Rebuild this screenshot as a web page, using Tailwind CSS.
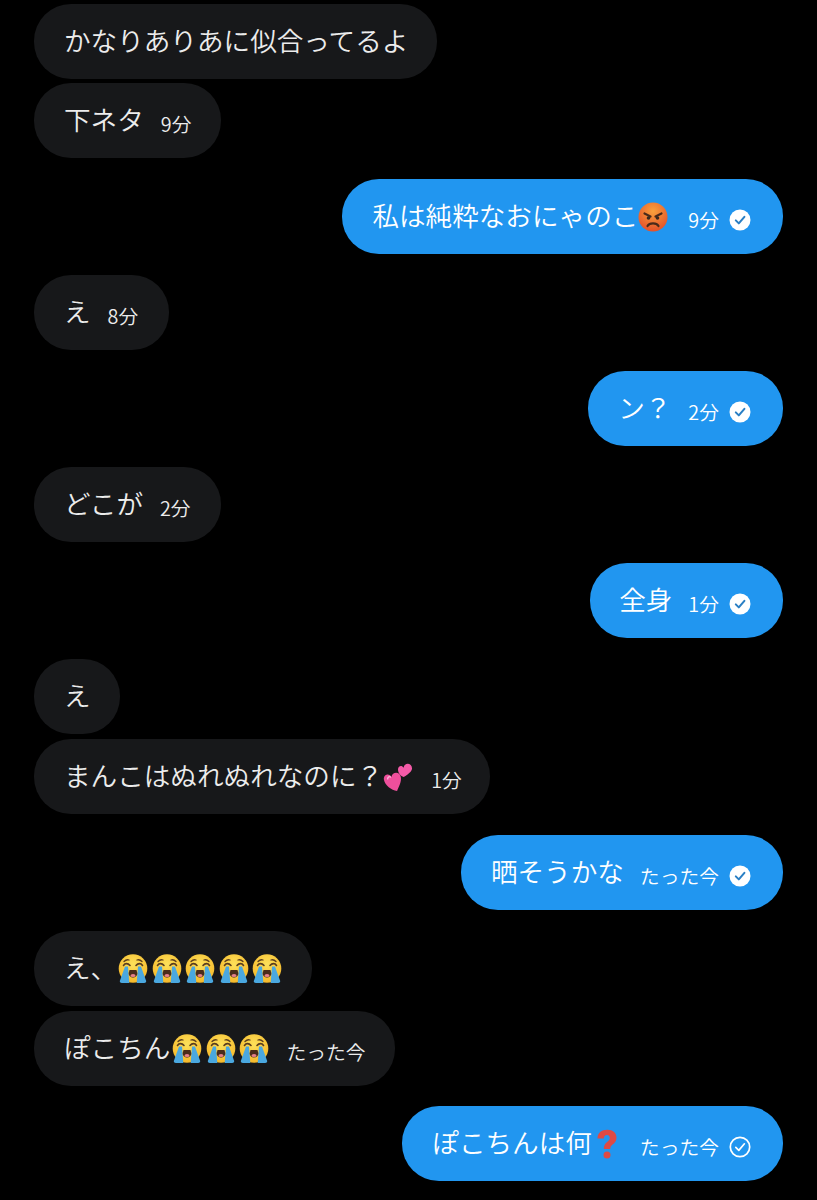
<!DOCTYPE html>
<html lang="ja">
<head>
    <meta charset="UTF-8">
    <meta name="viewport" content="width=device-width, initial-scale=1.0">
    <title>DM</title>
    <script src="https://cdn.jsdelivr.net/npm/@tailwindcss/browser@4"></script>
</head>
<body class="bg-black min-h-screen overflow-hidden font-[350] font-['Noto_Sans_CJK_JP','Noto_Sans',sans-serif]">
    <!-- Icons -->
    <svg class="absolute w-0 h-0">
        <defs>
            <radialGradient id="ag" cx="50%" cy="30%" r="70%"><stop offset="0" stop-color="#f9a13c"/><stop offset="1" stop-color="#e4512a"/></radialGradient>
            <radialGradient id="sg" cx="50%" cy="35%" r="65%"><stop offset="0" stop-color="#fde15a"/><stop offset="1" stop-color="#f5b82a"/></radialGradient>
        </defs>
        <symbol id="check" viewBox="0 0 22 22">
            <circle cx="11" cy="11" r="10.5" fill="#fff"/>
            <path d="M6.8 11.4l3 3 5.6-6.6" fill="none" stroke="#2a7fc4" stroke-width="2" stroke-linecap="round" stroke-linejoin="round"/>
        </symbol>
        <symbol id="check-outline" viewBox="0 0 22 22">
            <circle cx="11" cy="11" r="9.7" fill="none" stroke="#fff" stroke-width="1.7"/>
            <path d="M6.8 11.4l3 3 5.6-6.6" fill="none" stroke="#fff" stroke-width="1.7" stroke-linecap="round" stroke-linejoin="round"/>
        </symbol>
        <symbol id="angry" viewBox="0 0 30 30">
            <circle cx="15" cy="15" r="14.500" fill="url(#ag)"/>
            <path d="M6.500 11.500l6 3M23.500 11.500l-6 3" stroke="#4a2a1a" stroke-width="2.200" stroke-linecap="round"/>
            <circle cx="10.500" cy="16" r="1.800" fill="#3a2a20"/>
            <circle cx="19.500" cy="16" r="1.800" fill="#3a2a20"/>
            <path d="M9.500 24c2-3.500 9-3.500 11 0" fill="none" stroke="#4a2a1a" stroke-width="2.200" stroke-linecap="round"/>
        </symbol>
        <symbol id="hearts" viewBox="0 0 32 32">
            <path d="M15 31C9 30 2 25 1 19c-1-5 5-8 8-3 1-6 9-6 10 0 1 5-2 10-4 15z" fill="#ee4f9c"/>
            <path d="M22 16c-3-1-6-4-6-8 0-4 4-5 6-2 1-6 9-5 9 1 0 3-5 7-9 9z" fill="#f45aa8"/>
            <path d="M5 18c0-2 2-3 3-2" fill="none" stroke="#fbb6d8" stroke-width="1.500" stroke-linecap="round"/>
        </symbol>
        <symbol id="sob" viewBox="0 0 30 30">
            <circle cx="15" cy="14.500" r="14.300" fill="url(#sg)"/>
            <path d="M5.500 11.500c1.500-2.500 4.500-2.500 6.500 0M18 11.500c2-2.500 5-2.500 6.500 0" fill="none" stroke="#5a3d1e" stroke-width="1.600" stroke-linecap="round"/>
            <path d="M6 7.500c1.500-1.500 3.500-2 5-1.500M19 6c1.500-.500 3.500 0 5 1.500" fill="none" stroke="#5a3d1e" stroke-width="1.300" stroke-linecap="round"/>
            <path d="M7 12.500h3l1.300 16.500H4c-2 0-2.800-1.500-1.800-3z" fill="#4aa8e0"/>
            <path d="M20 12.500h3l4.800 13.500c1 1.500.200 3-1.800 3h-7.300z" fill="#4aa8e0"/>
            <path d="M11.500 16h7l.800 3c.300 2-1.300 4.500-4.300 4.500s-4.600-2.500-4.300-4.500z" fill="#4a2c1a"/>
            <ellipse cx="15" cy="21.500" rx="2.500" ry="1.500" fill="#e8808a"/>
        </symbol>
        <symbol id="question" viewBox="0 0 20 30">
            <path d="M.5 9.500C.5 4 4.500 .8 10.300 .8c5.800 0 9.200 3.200 9.200 8 0 3.500-2 5.300-4.200 7-1.500 1.200-2 2.300-2 4.200H6.800c0-3.500 1-5.300 3-6.800 1.700-1.300 3-2.400 3-4.200 0-1.900-1.200-3-2.900-3-2 0-3 1.300-3.100 3.500z" fill="#de4a45"/>
            <circle cx="10" cy="26" r="3.500" fill="#de4a45"/>
        </symbol>
    </svg>

    <div class="flex flex-col px-[34px] pt-[4px]">
        <!-- 相手 -->
        <div class="h-[75px] pb-[4px] self-start flex items-center rounded-[37px] bg-[#17181a] pl-[30px] pr-[29px] text-[#ececec] text-[26.6px]">かなりありあに似合ってるよ</div>
        <div class="h-[75px] pb-[4px] mt-[4px] self-start flex items-center rounded-[37px] bg-[#17181a] pl-[30px] pr-[30px] text-[#ececec] text-[26.6px]">
            <span>下ネタ</span><span class="ml-[17px] mt-[11px] text-[19.800px]">9分</span>
        </div>

        <!-- 自分 -->
        <div class="h-[75px] pb-[4px] mt-[21px] self-end flex items-center rounded-[37px] bg-[#2196f0] pl-[30px] pr-[32px] text-white text-[26.6px]">
            <span>私は純粋なおにゃのこ</span><svg class="w-[30px] h-[30px] mt-[4px]"><use href="#angry"/></svg><span class="ml-[20px] mt-[11px] text-[19.800px]">9分</span><svg class="w-[22px] h-[22px] ml-[10px] mt-[11px]"><use href="#check"/></svg>
        </div>

        <div class="h-[75px] pb-[4px] mt-[21px] self-start flex items-center rounded-[37px] bg-[#17181a] pl-[30px] pr-[31px] text-[#ececec] text-[26.6px]">
            <span>え</span><span class="ml-[17px] mt-[11px] text-[19.800px]">8分</span>
        </div>

        <div class="h-[75px] pb-[4px] mt-[21px] self-end flex items-center rounded-[37px] bg-[#2196f0] pl-[30px] pr-[32px] text-white text-[26.6px]">
            <span>ン？</span><span class="ml-[17px] mt-[11px] text-[19.800px]">2分</span><svg class="w-[22px] h-[22px] ml-[10px] mt-[11px]"><use href="#check"/></svg>
        </div>

        <div class="h-[75px] pb-[4px] mt-[21px] self-start flex items-center rounded-[37px] bg-[#17181a] pl-[30px] pr-[30px] text-[#ececec] text-[26.6px]">
            <span>どこが</span><span class="ml-[17px] mt-[11px] text-[19.800px]">2分</span>
        </div>

        <div class="h-[75px] pb-[4px] mt-[21px] self-end flex items-center rounded-[37px] bg-[#2196f0] pl-[29px] pr-[32px] text-white text-[26.6px]">
            <span>全身</span><span class="ml-[16px] mt-[11px] text-[19.800px]">1分</span><svg class="w-[22px] h-[22px] ml-[10px] mt-[11px]"><use href="#check"/></svg>
        </div>

        <div class="h-[75px] pb-[4px] mt-[21px] self-start flex items-center rounded-[37px] bg-[#17181a] pl-[30px] pr-[29px] text-[#ececec] text-[26.6px]">え</div>
        <div class="h-[75px] pb-[4px] mt-[5px] self-start flex items-center rounded-[37px] bg-[#17181a] pl-[30px] pr-[28px] text-[#ececec] text-[26.6px]">
            <span>まんこはぬれぬれなのに？</span><svg class="w-[30px] h-[32px] mt-[4px]"><use href="#hearts"/></svg><span class="ml-[18px] mt-[11px] text-[19.800px]">1分</span>
        </div>

        <div class="h-[75px] pb-[4px] mt-[21px] self-end flex items-center rounded-[37px] bg-[#2196f0] pl-[30px] pr-[32px] text-white text-[26.6px]">
            <span>晒そうかな</span><span class="ml-[16px] mt-[11px] text-[19.800px]">たった今</span><svg class="w-[22px] h-[22px] ml-[10px] mt-[11px]"><use href="#check"/></svg>
        </div>

        <div class="h-[75px] pb-[4px] mt-[21px] self-start flex items-center rounded-[37px] bg-[#17181a] pl-[30px] pr-[30px] text-[#ececec] text-[26.6px]">
            <span>え、</span><span class="flex gap-[3.500px] ml-[1px] mt-[4px]">
                <svg class="w-[30px] h-[30px]"><use href="#sob"/></svg><svg class="w-[30px] h-[30px]"><use href="#sob"/></svg><svg class="w-[30px] h-[30px]"><use href="#sob"/></svg><svg class="w-[30px] h-[30px]"><use href="#sob"/></svg><svg class="w-[30px] h-[30px]"><use href="#sob"/></svg>
            </span>
        </div>
        <div class="h-[75px] pb-[4px] mt-[5px] self-start flex items-center rounded-[37px] bg-[#17181a] pl-[30px] pr-[29px] text-[#ececec] text-[26.6px]">
            <span>ぽこちん</span><span class="flex gap-[3.500px] ml-[2px] mt-[4px]">
                <svg class="w-[30px] h-[30px]"><use href="#sob"/></svg><svg class="w-[30px] h-[30px]"><use href="#sob"/></svg><svg class="w-[30px] h-[30px]"><use href="#sob"/></svg>
            </span><span class="ml-[17px] mt-[11px] text-[19.800px]">たった今</span>
        </div>

        <div class="h-[75px] pb-[4px] mt-[20px] self-end flex items-center rounded-[37px] bg-[#2196f0] pl-[30px] pr-[32px] text-white text-[26.6px]">
            <span>ぽこちんは何</span><svg class="w-[20px] h-[30px] ml-[5px] mt-[4px]"><use href="#question"/></svg><span class="ml-[23px] mt-[11px] text-[19.800px]">たった今</span><svg class="w-[22px] h-[22px] ml-[10px] mt-[11px]"><use href="#check-outline"/></svg>
        </div>
    </div>
</body>
</html>
